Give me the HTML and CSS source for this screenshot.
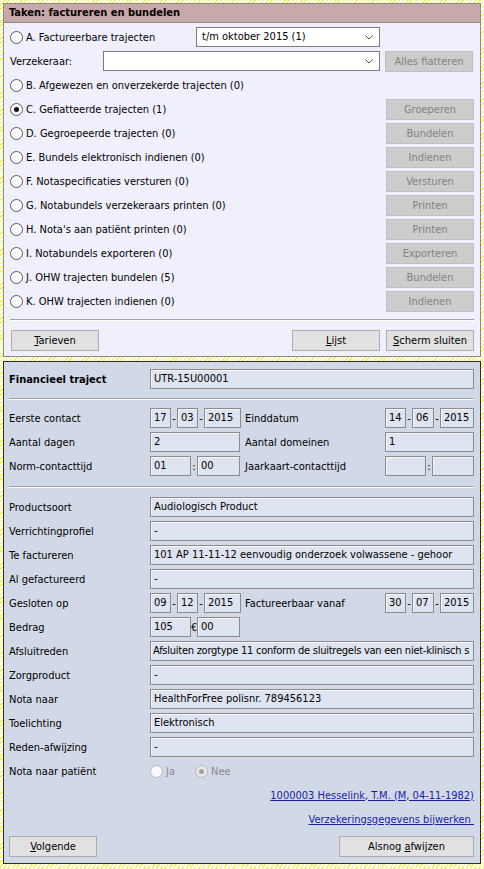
FILE: index.html
```html
<!DOCTYPE html>
<html lang="nl">
<head>
  <meta charset="UTF-8" />
  <title>Taken: factureren en bundelen</title>
  <link rel="stylesheet" href="styles.css">
</head>
<body>

  <!-- Takenlijst -->
  <div class="panel tasks">
    <div class="title">Taken: factureren en bundelen</div>
    <div class="task-body">
      <div class="row">
        <div class="opt opt-a"><span class="radio"></span>A. Factureerbare trajecten</div>
        <div class="combo combo-a">t/m oktober 2015 (1)<svg class="chev" width="8" height="5" viewBox="0 0 8 5"><polyline points="0.5,0.5 4,4 7.5,0.5" fill="none" stroke="#555" /></svg></div>
        <div class="btn-slot"></div>
      </div>
      <div class="row">
        <div class="opt opt-verz">Verzekeraar:</div>
        <div class="combo combo-verz"><svg class="chev" width="8" height="5" viewBox="0 0 8 5"><polyline points="0.5,0.5 4,4 7.5,0.5" fill="none" stroke="#555" /></svg></div>
        <button class="btn disabled">Alles fiatteren</button>
      </div>
      <div class="row">
        <div class="opt"><span class="radio"></span>B. Afgewezen en onverzekerde trajecten (0)</div>
        <div class="btn-slot"></div>
      </div>
      <div class="row">
        <div class="opt"><span class="radio checked"></span>C. Gefiatteerde trajecten (1)</div>
        <button class="btn disabled">Groeperen</button>
      </div>
      <div class="row">
        <div class="opt"><span class="radio"></span>D. Gegroepeerde trajecten (0)</div>
        <button class="btn disabled">Bundelen</button>
      </div>
      <div class="row">
        <div class="opt"><span class="radio"></span>E. Bundels elektronisch indienen (0)</div>
        <button class="btn disabled">Indienen</button>
      </div>
      <div class="row">
        <div class="opt"><span class="radio"></span>F. Notaspecificaties versturen (0)</div>
        <button class="btn disabled">Versturen</button>
      </div>
      <div class="row">
        <div class="opt"><span class="radio"></span>G. Notabundels verzekeraars printen (0)</div>
        <button class="btn disabled">Printen</button>
      </div>
      <div class="row">
        <div class="opt"><span class="radio"></span>H. Nota's aan patiënt printen (0)</div>
        <button class="btn disabled">Printen</button>
      </div>
      <div class="row">
        <div class="opt"><span class="radio"></span>I. Notabundels exporteren (0)</div>
        <button class="btn disabled">Exporteren</button>
      </div>
      <div class="row">
        <div class="opt"><span class="radio"></span>J. OHW trajecten bundelen (5)</div>
        <button class="btn disabled">Bundelen</button>
      </div>
      <div class="row">
        <div class="opt"><span class="radio"></span>K. OHW trajecten indienen (0)</div>
        <button class="btn disabled">Indienen</button>
      </div>

      <div class="sep sep-tasks"></div>

      <div class="footer">
        <button class="btn"><u>T</u>arieven</button>
        <span class="spacer"></span>
        <button class="btn"><u>L</u>ijst</button>
        <button class="btn"><u>S</u>cherm sluiten</button>
      </div>
    </div>
  </div>

  <!-- Financieel traject -->
  <div class="panel traject">
    <div class="row">
      <div class="lbl bold">Financieel traject</div>
      <div class="field wide">UTR-15U00001</div>
    </div>

    <div class="sep sep-1"></div>

    <div class="row">
      <div class="lbl">Eerste contact</div>
      <div class="group half">
        <div class="field w21">17</div><span class="dash w6">-</span>
        <div class="field w21">03</div><span class="dash w6">-</span>
        <div class="field w37">2015</div>
      </div>
      <div class="lbl lbl-r">Einddatum</div>
      <div class="group">
        <div class="field w21">14</div><span class="dash w6">-</span>
        <div class="field w22">06</div><span class="dash w6">-</span>
        <div class="field w34">2015</div>
      </div>
    </div>
    <div class="row">
      <div class="lbl">Aantal dagen</div>
      <div class="field w90">2</div>
      <div class="lbl lbl-r">Aantal domeinen</div>
      <div class="field w89">1</div>
    </div>
    <div class="row">
      <div class="lbl">Norm-contacttijd</div>
      <div class="group half">
        <div class="field w41">01</div><span class="dash w6">:</span>
        <div class="field w43">00</div>
      </div>
      <div class="lbl lbl-r">Jaarkaart-contacttijd</div>
      <div class="group">
        <div class="field w41"></div><span class="dash w6">:</span>
        <div class="field w42"></div>
      </div>
    </div>

    <div class="sep sep-2"></div>

    <div class="row">
      <div class="lbl">Productsoort</div>
      <div class="field wide">Audiologisch Product</div>
    </div>
    <div class="row">
      <div class="lbl">Verrichtingprofiel</div>
      <div class="field wide">-</div>
    </div>
    <div class="row">
      <div class="lbl">Te factureren</div>
      <div class="field wide">101 AP 11-11-12 eenvoudig onderzoek volwassene - gehoor</div>
    </div>
    <div class="row">
      <div class="lbl">Al gefactureerd</div>
      <div class="field wide">-</div>
    </div>
    <div class="row">
      <div class="lbl">Gesloten op</div>
      <div class="group half">
        <div class="field w21">09</div><span class="dash w6">-</span>
        <div class="field w21">12</div><span class="dash w6">-</span>
        <div class="field w37">2015</div>
      </div>
      <div class="lbl lbl-r">Factureerbaar vanaf</div>
      <div class="group">
        <div class="field w21">30</div><span class="dash w6">-</span>
        <div class="field w22">07</div><span class="dash w6">-</span>
        <div class="field w34">2015</div>
      </div>
    </div>
    <div class="row">
      <div class="lbl">Bedrag</div>
      <div class="group">
        <div class="field w41">105</div><span class="dash w6">€</span>
        <div class="field w43">00</div>
      </div>
    </div>
    <div class="row">
      <div class="lbl">Afsluitreden</div>
      <div class="field wide tight">Afsluiten zorgtype 11 conform de sluitregels van een niet-klinisch s</div>
    </div>
    <div class="row">
      <div class="lbl">Zorgproduct</div>
      <div class="field wide">-</div>
    </div>
    <div class="row">
      <div class="lbl">Nota naar</div>
      <div class="field wide">HealthForFree polisnr. 789456123</div>
    </div>
    <div class="row">
      <div class="lbl">Toelichting</div>
      <div class="field wide">Elektronisch</div>
    </div>
    <div class="row">
      <div class="lbl">Reden-afwijzing</div>
      <div class="field wide">-</div>
    </div>
    <div class="row">
      <div class="lbl">Nota naar patiënt</div>
      <div class="choice"><span class="radio off"></span>Ja</div>
      <div class="choice"><span class="radio off checked"></span>Nee</div>
    </div>

    <div class="row links">
      <a href="#" class="link">1000003 Hesselink, T.M. (M, 04-11-1982)</a>
    </div>
    <div class="row links">
      <a href="#" class="link">Verzekeringsgegevens bijwerken&nbsp;</a>
    </div>

    <div class="footer">
      <button class="btn"><u>V</u>olgende</button>
      <span class="spacer"></span>
      <button class="btn btn-wide">Alsnog <u>a</u>fwijzen</button>
    </div>
  </div>

</body>
</html>
```

FILE: styles.css
```css
body {
  margin: 0;
  padding: 3px;
  font-family: "DejaVu Sans Condensed", "DejaVu Sans", sans-serif;
  font-size: 11px;
  color: #000;
  background: repeating-linear-gradient(-45deg, #f2ee5a 0, #f2ee5a 1px, #fffff2 1px, #fffff2 3px);
}

.panel {
  box-sizing: border-box;
  width: 478px;
  border: 1px solid #8a8a8a;
}

/* Takenlijst */
.tasks {
  background-color: #f0f0fc;
  height: 354px;
}

.title {
  height: 18px;
  line-height: 18px;
  padding-left: 5px;
  font-weight: bold;
  background-color: #c8a8a8;
  border-bottom: 1px solid #8a8a8a;
}

.task-body {
  padding: 2px 6px 0 6px;
}

.row {
  display: flex;
  align-items: center;
  height: 24px;
}

.opt {
  flex: 1;
  display: flex;
  align-items: center;
  white-space: nowrap;
}

.opt-a {
  flex: none;
  width: 186px;
}

.opt-verz {
  flex: none;
  width: 93px;
}

.radio {
  box-sizing: border-box;
  width: 13px;
  height: 13px;
  border: 1px solid #5a5a5a;
  border-radius: 50%;
  background-color: #fff;
  margin-right: 3px;
  display: inline-flex;
  align-items: center;
  justify-content: center;
  flex: none;
}

.radio.checked::after {
  content: "";
  width: 5px;
  height: 5px;
  border-radius: 50%;
  background-color: #111;
}

.radio.off {
  border-color: #b8b8b8;
  background-color: #fafafa;
}

.radio.off.checked {
  background-color: #e8e8e8;
}

.radio.off.checked::after {
  background-color: #a0a0a0;
}

.combo {
  box-sizing: border-box;
  position: relative;
  height: 20px;
  line-height: 18px;
  padding-left: 5px;
  background-color: #fff;
  border: 1px solid #7a7a7a;
  margin-right: 5px;
}

.combo-a {
  width: 184px;
}

.combo-verz {
  width: 277px;
}

.chev {
  position: absolute;
  right: 6px;
  top: 7px;
}

.btn-slot {
  width: 88px;
}

.btn {
  box-sizing: border-box;
  width: 88px;
  height: 21px;
  padding: 0;
  font-family: inherit;
  font-size: 11px;
  color: #000;
  background-color: #e1e1e1;
  border: 1px solid #adadad;
}

.btn.disabled {
  color: #838383;
  background-color: #cccccc;
  border-color: #c0c0c0;
}

.btn-wide {
  width: 135px;
}

.sep {
  border-top: 1px solid #a0a0a0;
  border-bottom: 1px solid #fff;
}

.sep-tasks {
  margin: 6px 0 9px 0;
}

.footer {
  display: flex;
  gap: 6px;
  padding-left: 1px;
}

.spacer {
  flex: 1;
}

/* Financieel traject */
.traject {
  margin-top: 4px;
  height: 503px;
  padding: 5px 6px 0 5px;
  background-color: #d1d9e7;
  border-color: #2e2e2e;
}

.lbl {
  width: 141px;
  flex: none;
  white-space: nowrap;
}

.bold {
  font-weight: bold;
}

.lbl-r {
  width: 140px;
  margin-left: auto;
}

.field {
  box-sizing: border-box;
  height: 20px;
  line-height: 18px;
  padding-left: 3px;
  background-color: #dee4ef;
  border: 1px solid #8c8c8c;
  box-shadow: inset 1px 1px 0 #f4f6fa;
  white-space: nowrap;
  overflow: hidden;
  flex: none;
}

.wide {
  flex: 1;
}

.tight {
  padding-left: 2px;
  letter-spacing: -0.25px;
}

.group {
  display: flex;
  align-items: center;
  flex: none;
}

.half {
  width: 91px;
}

.dash {
  text-align: center;
  flex: none;
}

.w6 { width: 6px; }
.w21 { width: 21px; }
.w22 { width: 22px; }
.w34 { width: 34px; }
.w37 { width: 37px; }
.w41 { width: 41px; }
.w42 { width: 42px; }
.w43 { width: 43px; }
.w89 { width: 89px; }
.w90 { width: 90px; }

.sep-1 {
  margin: 7px 0 6px 0;
}

.sep-2 {
  margin: 8px 0 7px 0;
}

.choice {
  display: flex;
  align-items: center;
  width: 45px;
  color: #8a8a8a;
}

.links {
  justify-content: flex-end;
}

.link {
  color: #1c1ca8;
  text-decoration: underline;
}

.traject .footer {
  margin-top: 5px;
  padding-left: 0;
}
```
